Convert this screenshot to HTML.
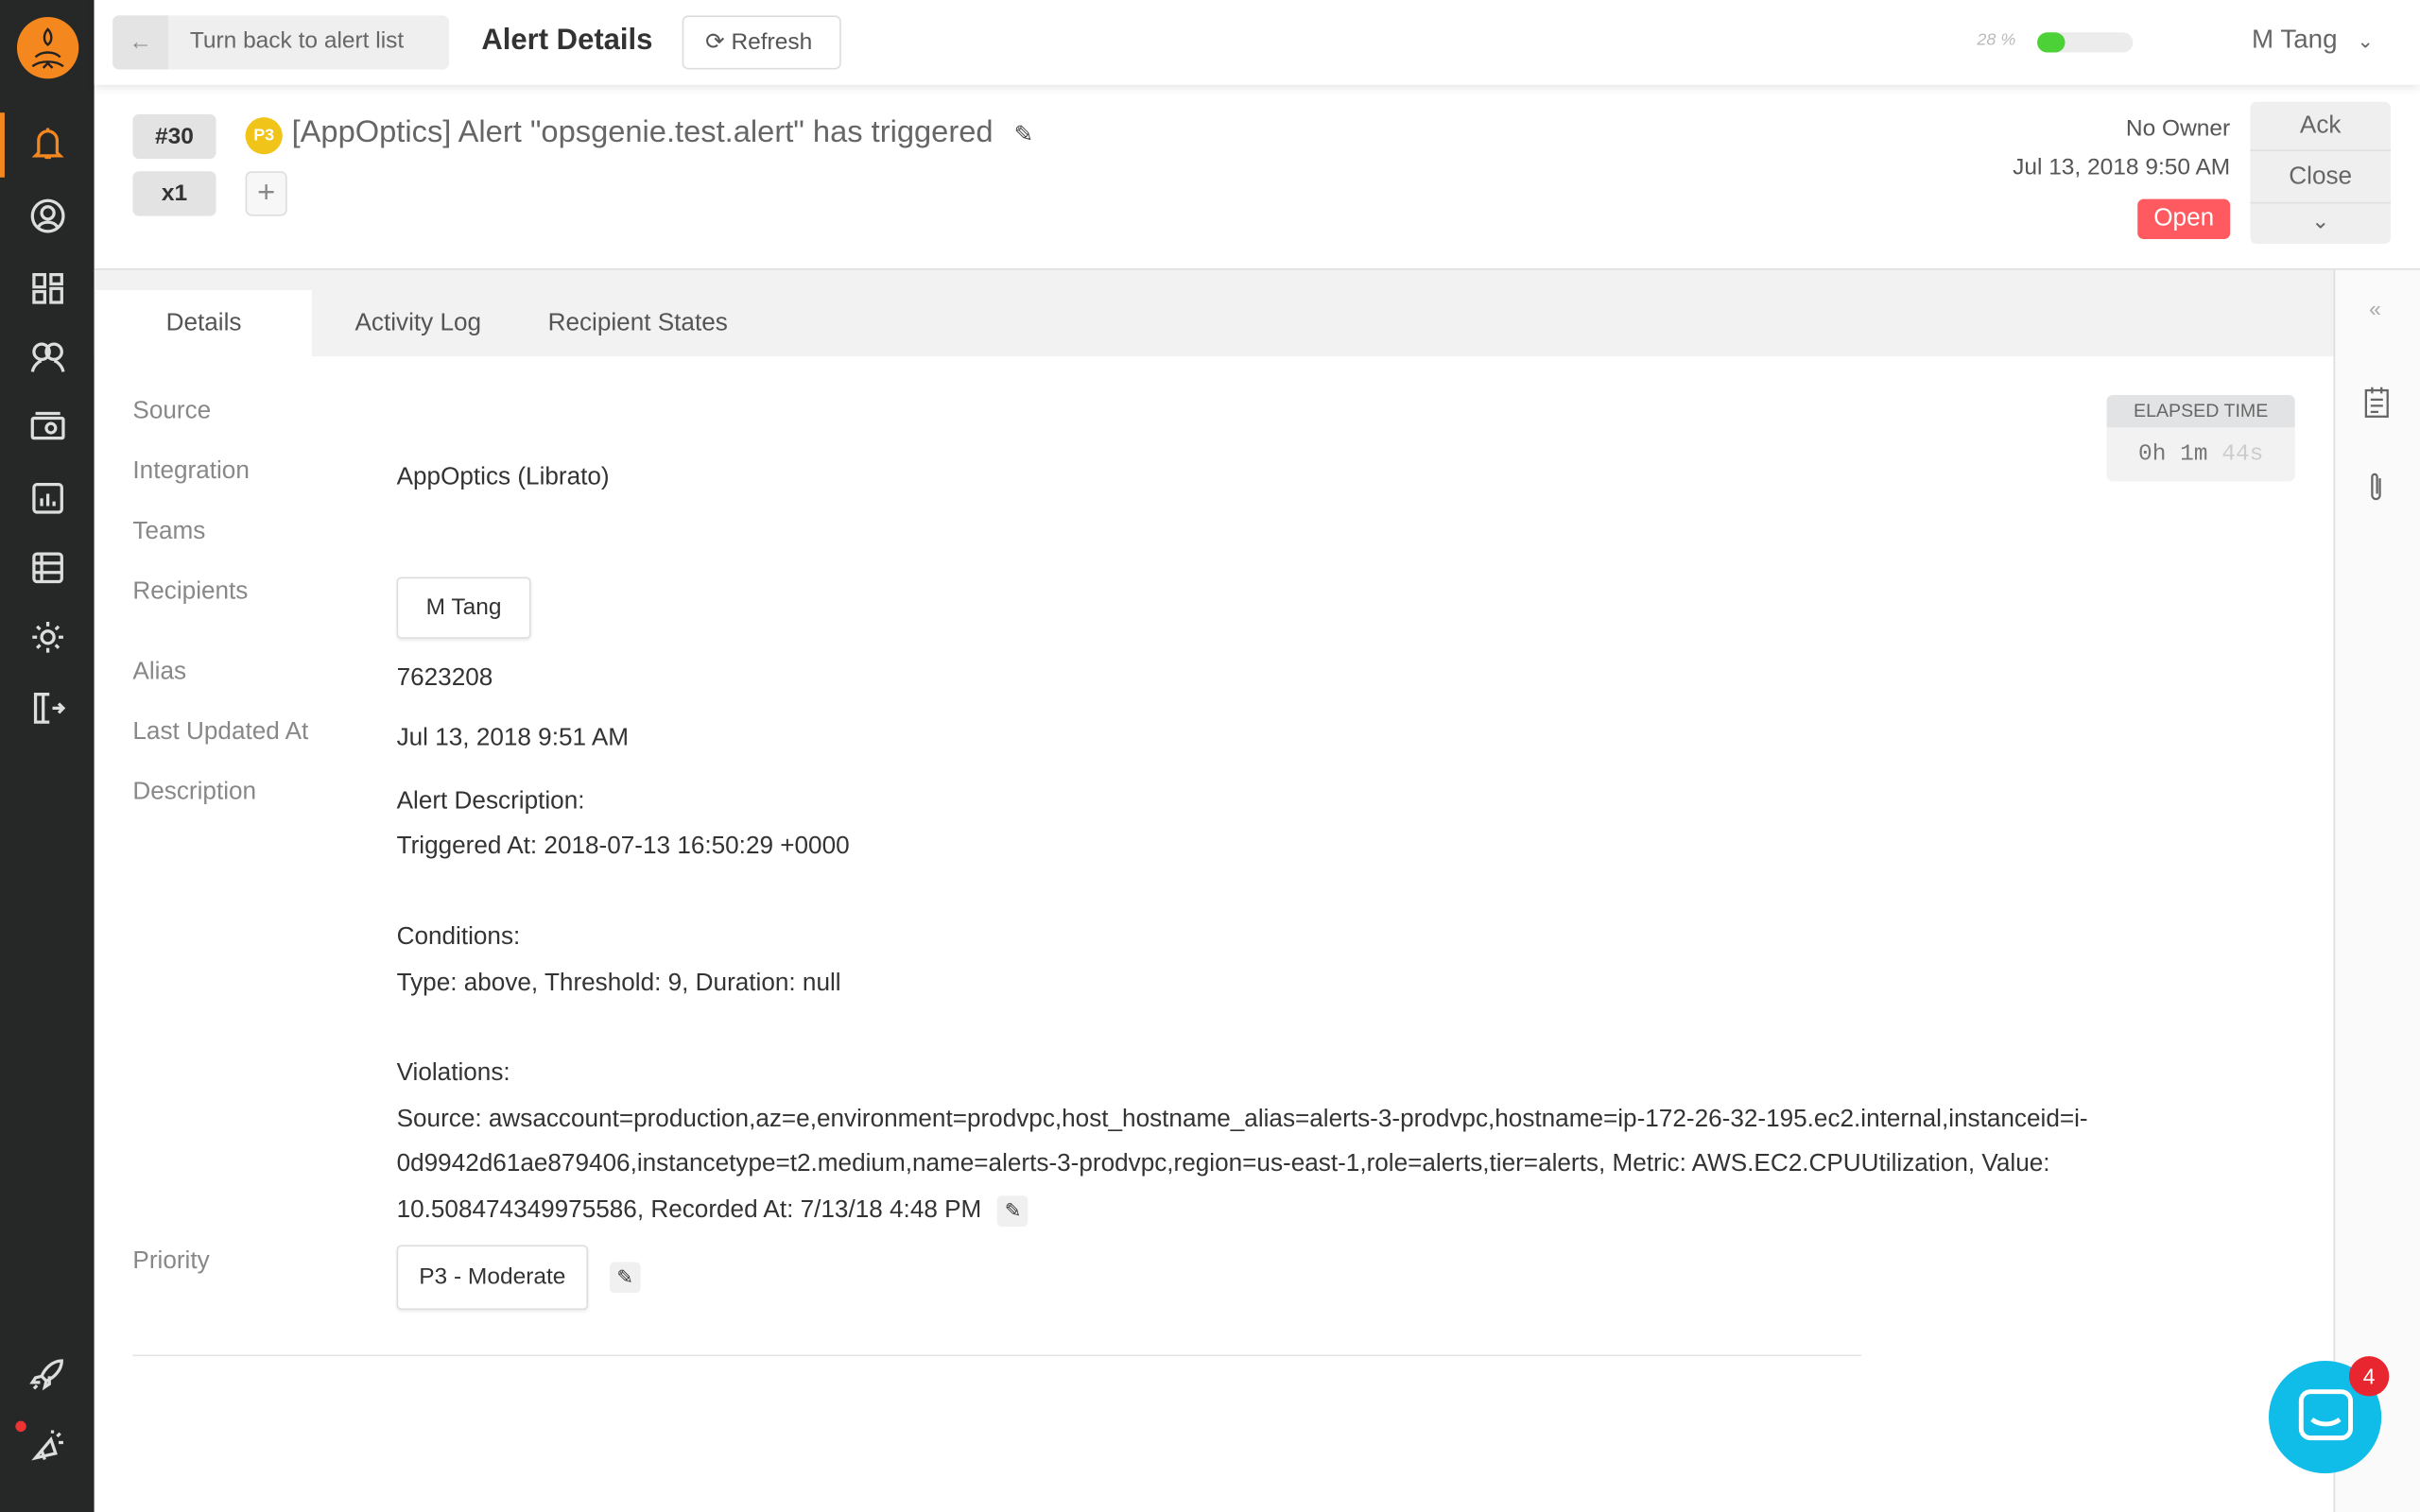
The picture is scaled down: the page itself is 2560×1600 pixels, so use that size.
<!DOCTYPE html>
<html><head><meta charset="utf-8"><style>
*{box-sizing:border-box;margin:0;padding:0}
html,body{width:2560px;height:1600px;overflow:hidden;background:#fff}
#w{width:1568px;height:980px;transform:scale(1.632653);transform-origin:0 0;position:relative;font-family:"Liberation Sans",sans-serif;color:#333}
.abs{position:absolute}
#sb{left:0;top:0;width:61px;height:980px;background:#262828}
.ic{position:absolute;left:18px;width:26px;height:26px}
#hdr{left:61px;top:0;right:0;height:55px;background:#fff;box-shadow:0 2px 6px rgba(0,0,0,.1);z-index:2}
.btn{position:absolute;border-radius:4px;font-size:15px}
.lbl{position:absolute;left:86px;font-size:16px;color:#888}
.val{position:absolute;left:257px;font-size:16px;color:#333}
.tag{position:absolute;background:#e3e3e3;border-radius:4px;font-weight:bold;font-size:15px;text-align:center}
</style></head><body><div id="w">
<div id="sb" class="abs">
 <div class="abs" style="left:11px;top:11px;width:40px;height:40px;border-radius:50%;background:#f5871f"></div>
 <svg class="abs" style="left:11px;top:11px" width="40" height="40" viewBox="0 0 40 40" fill="none" stroke="#222" stroke-width="1.5"><path d="M20 8c-3 3-3 8 0 10c3-2 3-7 0-10zM12 26c4-4 12-4 16 0M10 32c5-4 15-4 20 0M17 33l3-3 3 3"/></svg>
 <div class="abs" style="left:0;top:73px;width:3px;height:42px;background:#f5871f"></div>
 <svg class="ic" style="top:80px" viewBox="0 0 26 26" fill="none" stroke="#f5871f" stroke-width="2"><path d="M13 3v2M7 19V11a6 6 0 0112 0v8l2 2H5zM11 22h4"/></svg>
 <svg class="ic" style="top:127px" viewBox="0 0 26 26" fill="none" stroke="#ddd" stroke-width="2"><circle cx="13" cy="13" r="10"/><circle cx="13" cy="11" r="4"/><path d="M7 20c2-4 10-4 12 0"/></svg>
 <svg class="ic" style="top:174px" viewBox="0 0 26 26" fill="none" stroke="#ddd" stroke-width="2"><rect x="4" y="4" width="7" height="8"/><rect x="15" y="4" width="7" height="6"/><rect x="4" y="15" width="7" height="7"/><rect x="15" y="13" width="7" height="9"/></svg>
 <svg class="ic" style="top:219px" viewBox="0 0 26 26" fill="none" stroke="#ddd" stroke-width="2"><circle cx="9" cy="9" r="5"/><circle cx="17" cy="9" r="5"/><path d="M3 22c1-5 5-7 6-7M23 22c-1-5-5-7-6-7"/></svg>
 <svg class="ic" style="top:264px" viewBox="0 0 26 26" fill="none" stroke="#ddd" stroke-width="2"><rect x="3" y="7" width="20" height="13" rx="1"/><path d="M5 4h16"/><circle cx="15" cy="13.5" r="3"/></svg>
 <svg class="ic" style="top:310px" viewBox="0 0 26 26" fill="none" stroke="#ddd" stroke-width="2"><rect x="4" y="4" width="18" height="18" rx="2"/><path d="M9 18v-5M13 18v-8M17 18v-3"/></svg>
 <svg class="ic" style="top:355px" viewBox="0 0 26 26" fill="none" stroke="#ddd" stroke-width="2"><rect x="4" y="4" width="18" height="18" rx="2"/><path d="M4 10h18M4 16h18M9 4v18"/></svg>
 <svg class="ic" style="top:400px" viewBox="0 0 26 26" fill="none" stroke="#ddd" stroke-width="2"><circle cx="13" cy="13" r="4"/><path d="M13 3v3M13 20v3M3 13h3M20 13h3M6 6l2 2M18 18l2 2M6 20l2-2M18 8l2-2"/></svg>
 <svg class="ic" style="top:446px" viewBox="0 0 26 26" fill="none" stroke="#ddd" stroke-width="2"><path d="M14 4H5v18h9M10 4v18M16 13h7M20 10l3 3-3 3"/></svg>
 <svg class="ic" style="top:878px" viewBox="0 0 26 26" fill="none" stroke="#ddd" stroke-width="2"><path d="M22 4c-6 0-11 5-13 10l3 3c5-2 10-7 10-13zM9 14l-4 1-2 3 5 0M12 17l-1 4 3-2 0-5M6 20l-2 2"/></svg>
 <div class="abs" style="left:10px;top:921px;width:7px;height:7px;border-radius:50%;background:#e33"></div>
 <svg class="ic" style="top:925px" viewBox="0 0 26 26" fill="none" stroke="#ddd" stroke-width="2"><path d="M5 20l10-12 3 9zM9 15l2 6M19 6l2-2M20 10h3M16 4V2"/></svg>
</div>
<div id="hdr" class="abs">
 <div class="btn" style="left:12px;top:10px;width:218px;height:35px;background:#efefef"><div class="abs" style="left:0;top:0;width:36px;height:35px;background:#e4e4e4;border-radius:4px 0 0 4px;text-align:center;line-height:35px;color:#888">←</div><span class="abs" style="left:50px;top:8px;color:#666">Turn back to alert list</span></div>
 <div class="abs" style="left:251px;top:16px;font-size:19px;font-weight:bold;color:#333">Alert Details</div>
 <div class="btn" style="left:381px;top:10px;width:103px;height:35px;border:1px solid #ddd;color:#555;line-height:33px;padding-left:14px">⟳ Refresh</div>
 <div class="abs" style="left:1220px;top:20px;font-size:11px;color:#bbb;font-style:italic">28 %</div>
 <div class="abs" style="left:1259px;top:21px;width:62px;height:13px;border-radius:7px;background:#ececec"><div style="width:18px;height:13px;border-radius:7px;background:#4cd137"></div></div>
 <div class="abs" style="left:1398px;top:16px;font-size:17px;color:#666">M Tang <span style="font-size:13px;margin-left:8px">⌄</span></div>
</div>
<div class="tag" style="left:86px;top:74px;width:54px;height:29px;line-height:29px">#30</div>
<div class="tag" style="left:86px;top:111px;width:54px;height:29px;line-height:29px">x1</div>
<div class="abs" style="left:159px;top:111px;width:27px;height:29px;border:1px solid #ddd;border-radius:4px;background:#f7f7f7;text-align:center;line-height:26px;color:#888;font-size:20px">+</div>
<div class="abs" style="left:159px;top:76px;width:24px;height:24px;border-radius:50%;background:#f0c419;color:#fff;font-size:11px;font-weight:bold;text-align:center;line-height:24px">P3</div>
<div class="abs" style="left:189px;top:75px;font-size:20px;color:#666">[AppOptics] Alert "opsgenie.test.alert" has triggered <span style="font-size:15px;margin-left:8px;color:#444">✎</span></div>
<div class="abs" style="right:123px;top:75px;font-size:15px;color:#555">No Owner</div>
<div class="abs" style="right:123px;top:100px;font-size:15px;color:#555">Jul 13, 2018 9:50 AM</div>
<div class="abs" style="left:1385px;top:129px;width:60px;height:26px;background:#ff5a5f;border-radius:4px;color:#fff;font-size:16px;text-align:center;line-height:26px">Open</div>
<div class="abs" style="left:1458px;top:66px;width:91px;height:92px;background:#efefef;border-radius:4px;color:#666;font-size:16px;text-align:center">
 <div style="height:32px;line-height:32px;border-bottom:1px solid #e0e0e0">Ack</div>
 <div style="height:34px;line-height:34px;border-bottom:1px solid #e0e0e0">Close</div>
 <div style="height:26px;line-height:22px;font-size:14px">⌄</div>
</div>
<div class="abs" style="left:61px;top:174px;width:1507px;height:1px;background:#ddd"></div>
<div class="abs" style="left:61px;top:175px;width:1451px;height:56px;background:#f2f2f2"></div>
<div class="abs" style="left:62px;top:188px;width:140px;height:43px;background:#fff;text-align:center;line-height:43px;font-size:16px;color:#555">Details</div>
<div class="abs" style="left:230px;top:201px;font-size:16px;color:#555">Activity Log</div>
<div class="abs" style="left:355px;top:201px;font-size:16px;color:#555">Recipient States</div>
<div class="abs" style="left:1512px;top:175px;width:56px;height:805px;background:#fafafa;border-left:1px solid #ddd"></div>
<div class="abs" style="left:1535px;top:192px;font-size:14px;color:#aaa">«</div>
<svg class="abs" style="left:1531px;top:250px" width="18" height="22" viewBox="0 0 18 22" fill="none" stroke="#666" stroke-width="1.4"><rect x="2" y="3" width="14" height="17"/><path d="M6 1v4M12 1v4M5 9h8M5 13h8M5 17h5"/></svg>
<svg class="abs" style="left:1533px;top:305px" width="14" height="22" viewBox="0 0 14 22" fill="none" stroke="#666" stroke-width="1.4"><path d="M9 5v11a2.5 2.5 0 01-5 0V4a1.6 1.6 0 013.2 0v11"/></svg>
<div class="abs" style="left:1365px;top:256px;width:122px;height:56px;background:#f2f2f2;border-radius:4px;overflow:hidden;text-align:center">
 <div style="height:21px;background:#e2e3e4;font-size:12px;color:#666;line-height:21px">ELAPSED TIME</div>
 <div style="font-family:'Liberation Mono',monospace;font-size:15px;color:#777;line-height:36px">0h 1m <span style="color:#ccc">44s</span></div>
</div>
<div class="lbl" style="top:258px">Source</div>
<div class="lbl" style="top:297px">Integration</div>
<div class="val" style="top:301px">AppOptics (Librato)</div>
<div class="lbl" style="top:336px">Teams</div>
<div class="lbl" style="top:375px">Recipients</div>
<div class="abs" style="left:257px;top:374px;width:87px;height:40px;border:1px solid #ddd;border-radius:3px;box-shadow:0 1px 2px rgba(0,0,0,.08);text-align:center;line-height:38px;font-size:15px">M Tang</div>
<div class="lbl" style="top:427px">Alias</div>
<div class="val" style="top:431px">7623208</div>
<div class="lbl" style="top:466px">Last Updated At</div>
<div class="val" style="top:470px">Jul 13, 2018 9:51 AM</div>
<div class="lbl" style="top:505px">Description</div>
<div class="val" style="top:505px;line-height:29.4px;width:1150px">Alert Description:<br>Triggered At: 2018-07-13 16:50:29 +0000<br><br>Conditions:<br>Type: above, Threshold: 9, Duration: null<br><br>Violations:<br>Source: awsaccount=production,az=e,environment=prodvpc,host_hostname_alias=alerts-3-prodvpc,hostname=ip-172-26-32-195.ec2.internal,instanceid=i-0d9942d61ae879406,instancetype=t2.medium,name=alerts-3-prodvpc,region=us-east-1,role=alerts,tier=alerts, Metric: AWS.EC2.CPUUtilization, Value: 10.508474349975586, Recorded At: 7/13/18 4:48 PM <span style="display:inline-block;width:20px;height:20px;background:#f0f0f0;border-radius:3px;text-align:center;line-height:20px;font-size:13px;margin-left:6px">✎</span></div>
<div class="lbl" style="top:809px">Priority</div>
<div class="abs" style="left:257px;top:807px;width:124px;height:42px;border:1px solid #ddd;border-radius:3px;box-shadow:0 1px 2px rgba(0,0,0,.08);text-align:center;line-height:40px;font-size:15px">P3 - Moderate</div>
<div class="abs" style="left:395px;top:818px;width:20px;height:20px;background:#f0f0f0;border-radius:3px;text-align:center;line-height:20px;font-size:13px">✎</div>
<div class="abs" style="left:86px;top:878px;width:1120px;height:1px;background:#e5e5e5"></div>
<div class="abs" style="left:1470px;top:882px;width:73px;height:73px;border-radius:50%;background:#10bde8"></div>
<svg class="abs" style="left:1487px;top:898px" width="40" height="40" viewBox="0 0 40 40" fill="none" stroke="#fff" stroke-width="3"><rect x="4" y="4" width="32" height="30" rx="6"/><path d="M11 22c5 4 13 4 18 0"/></svg>
<div class="abs" style="left:1522px;top:879px;width:26px;height:26px;border-radius:50%;background:#e8262f;color:#fff;font-size:14px;text-align:center;line-height:26px">4</div>
</div></body></html>
